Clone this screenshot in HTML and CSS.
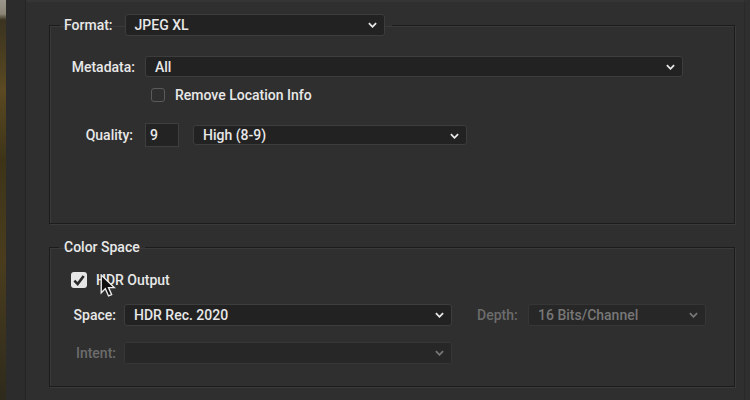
FILE: index.html
```html
<!DOCTYPE html>
<html lang="en">
<head>
    <meta charset="UTF-8">
    <title>Export options</title>
    <link rel="stylesheet" href="styles.css">
</head>
<body>
    <div class="photo"></div>
    <div class="sidebar"></div>
    <main class="dialog">
        <fieldset class="group group-format">
            <legend class="legend-select">
                <span class="label">Format:</span>
                <span class="select select-format">JPEG XL<svg class="chev" viewBox="0 0 10 6"><polyline points="1,1 5,5 9,1"/></svg></span>
            </legend>
            <div class="rows">
                <span class="label">Metadata:</span>
                <span class="select select-meta">All<svg class="chev" viewBox="0 0 10 6"><polyline points="1,1 5,5 9,1"/></svg></span>

                <span></span>
                <label class="check-row">
                    <span class="box"></span>
                    Remove Location Info
                </label>

                <span class="label label-quality">Quality:</span>
                <div class="quality">
                    <span class="field">9</span>
                    <span class="select select-quality">High (8-9)<svg class="chev" viewBox="0 0 10 6"><polyline points="1,1 5,5 9,1"/></svg></span>
                </div>
            </div>
        </fieldset>

        <fieldset class="group group-color">
            <legend class="legend-text">Color Space</legend>
            <label class="check-row hdr">
                <span class="box checked"><svg viewBox="0 0 12 12"><polyline points="2.5,6.5 5,9 9.5,3"/></svg></span>
                HDR Output
                <svg class="cursor" viewBox="0 0 15 23"><path d="M1 1 L1 18 L5 14 L8 21 L11 19.8 L8 13 L13.5 13 Z"/></svg>
            </label>
            <div class="row row-space">
                <span class="label label-space">Space:</span>
                <span class="select select-space">HDR Rec. 2020<svg class="chev" viewBox="0 0 10 6"><polyline points="1,1 5,5 9,1"/></svg></span>
                <span class="label dim label-depth">Depth:</span>
                <span class="select disabled select-depth">16 Bits/Channel<svg class="chev" viewBox="0 0 10 6"><polyline points="1,1 5,5 9,1"/></svg></span>
            </div>
            <div class="row row-intent">
                <span class="label dim label-space">Intent:</span>
                <span class="select disabled select-space"><svg class="chev" viewBox="0 0 10 6"><polyline points="1,1 5,5 9,1"/></svg></span>
            </div>
        </fieldset>
    </main>
</body>
</html>
```

FILE: styles.css
```css
* {
    box-sizing: border-box;
    margin: 0;
    padding: 0;
}

html,
body {
    height: 100%;
}

body {
    display: flex;
    background: #2f2f2f;
    color: #e8e8e8;
    font-family: Roboto, "Liberation Sans", Arial, sans-serif;
    font-size: 14px;
    font-weight: 500;
    overflow: hidden;
}

.photo {
    flex: none;
    width: 6px;
    background: linear-gradient(#9a968c 0, #8a8576 14px, #3a3320 20px, #5b4a22 90px, #3d3418 160px, #4a3d1e 260px, #2e2a1c 400px);
}

.sidebar {
    flex: none;
    width: 20px;
    background: #2c2c2c;
    border-right: 1px solid #242424;
}

.dialog {
    flex: none;
    width: 719px;
    padding: 12px 0 0 23px;
    border-top: 2px solid #353535;
    border-right: 1px solid #292929;
}

.group {
    width: 686px;
    border: 1px solid #1c1c1c;
    box-shadow: inset 1px 1px 0 #3a3a3a, 1px 1px 0 #3a3a3a;
}

.group-format {
    height: 210px;
}

.group-color {
    margin-top: 15px;
    height: 148px;
}

.legend-select {
    display: flex;
    align-items: center;
    gap: 12px;
    margin-left: 10px;
    padding: 0 7px 0 4px;
}

.legend-text {
    margin-left: 9px;
    padding: 0 5px;
}

.label {
    text-align: right;
    white-space: nowrap;
}

.dim {
    color: #6c6c6c;
}

.select {
    position: relative;
    display: flex;
    align-items: center;
    height: 21px;
    padding-left: 9px;
    background: #222;
    border: 1px solid #3d3d3d;
    border-radius: 3px;
    white-space: nowrap;
}

.select.disabled {
    background: #272727;
    border-color: #363636;
    color: #777;
}

.chev {
    position: absolute;
    right: 7px;
    top: 7px;
    width: 9px;
    height: 6px;
    fill: none;
    stroke: #e8e8e8;
    stroke-width: 2;
}

.disabled .chev {
    stroke: #777;
}

.select-format {
    width: 260px;
    height: 22px;
}

.rows {
    display: grid;
    grid-template-columns: 65px 538px;
    column-gap: 10px;
    align-items: center;
    padding: 20px 0 0 20px;
}

.select-meta {
    width: 538px;
}

.check-row {
    display: flex;
    align-items: center;
    gap: 10px;
    margin: 10px 0 0 6px;
}

.box {
    width: 14px;
    height: 14px;
    border: 1px solid #5a5a5a;
    border-radius: 3px;
}

.box.checked {
    width: 16px;
    height: 16px;
    background: #e6e6e6;
    border: none;
}

.box svg {
    width: 16px;
    height: 16px;
    fill: none;
    stroke: #2a2a2a;
    stroke-width: 2;
}

.label-quality {
    margin-top: 20px;
    margin-right: 2px;
}

.quality {
    display: flex;
    align-items: center;
    gap: 14px;
    margin-top: 20px;
}

.field {
    width: 34px;
    height: 24px;
    padding: 3px 4px;
    background: #232323;
    border: 1px solid #3e3e3e;
}

.select-quality {
    width: 274px;
    height: 20px;
}

.hdr {
    position: relative;
    gap: 9px;
    margin: 17px 0 0 21px;
}

.cursor {
    position: absolute;
    left: 29px;
    top: 2px;
    width: 16px;
    height: 24px;
    fill: #111;
    stroke: #eee;
    stroke-width: 1.3;
}

.row {
    display: flex;
    align-items: center;
    padding-left: 22px;
}

.row-space {
    margin-top: 16px;
}

.row-intent {
    margin-top: 16px;
}

.label-space {
    width: 44px;
    margin-right: 8px;
}

.select-space {
    width: 328px;
    height: 22px;
}

.label-depth {
    width: 43px;
    margin: 0 8px 0 25px;
    text-align: left;
}

.select-depth {
    width: 178px;
    height: 22px;
}
```
